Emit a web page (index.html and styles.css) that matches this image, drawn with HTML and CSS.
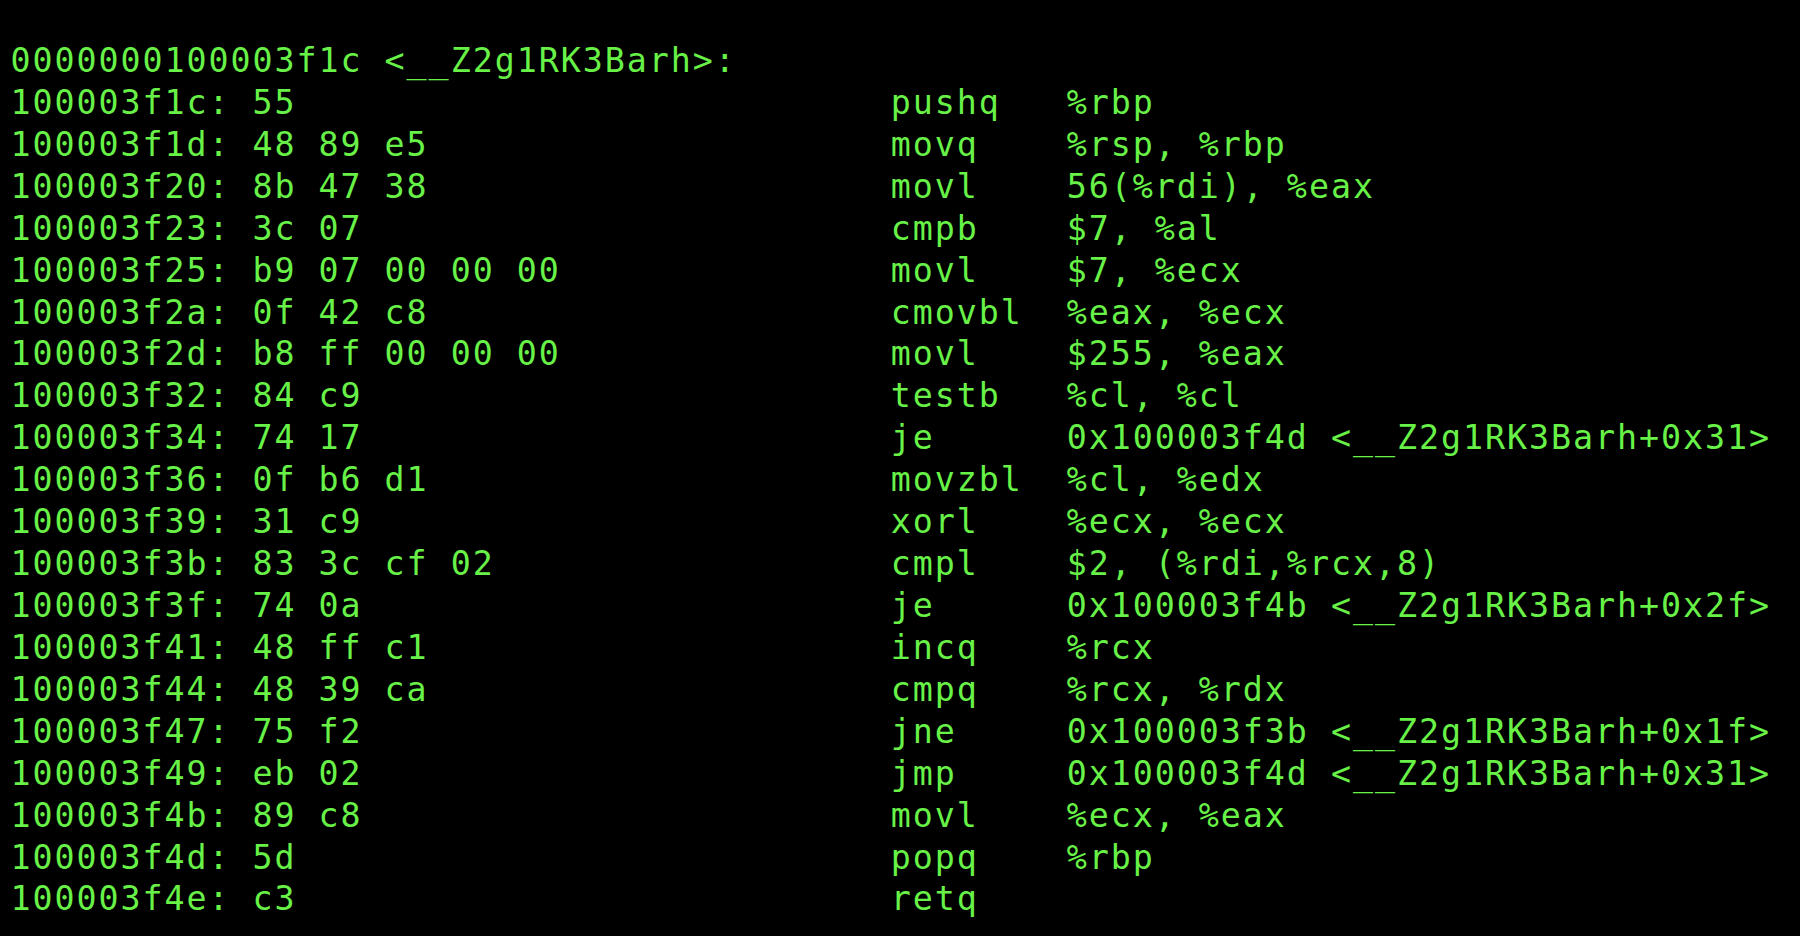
FILE: index.html
```html
<!DOCTYPE html>
<html>
<head>
<meta charset="utf-8">
<link rel="stylesheet" href="styles.css">
</head>
<body>
<pre class="term">0000000100003f1c &lt;__Z2g1RK3Barh&gt;:
100003f1c: 55                           pushq   %rbp
100003f1d: 48 89 e5                     movq    %rsp, %rbp
100003f20: 8b 47 38                     movl    56(%rdi), %eax
100003f23: 3c 07                        cmpb    $7, %al
100003f25: b9 07 00 00 00               movl    $7, %ecx
100003f2a: 0f 42 c8                     cmovbl  %eax, %ecx
100003f2d: b8 ff 00 00 00               movl    $255, %eax
100003f32: 84 c9                        testb   %cl, %cl
100003f34: 74 17                        je      0x100003f4d &lt;__Z2g1RK3Barh+0x31&gt;
100003f36: 0f b6 d1                     movzbl  %cl, %edx
100003f39: 31 c9                        xorl    %ecx, %ecx
100003f3b: 83 3c cf 02                  cmpl    $2, (%rdi,%rcx,8)
100003f3f: 74 0a                        je      0x100003f4b &lt;__Z2g1RK3Barh+0x2f&gt;
100003f41: 48 ff c1                     incq    %rcx
100003f44: 48 39 ca                     cmpq    %rcx, %rdx
100003f47: 75 f2                        jne     0x100003f3b &lt;__Z2g1RK3Barh+0x1f&gt;
100003f49: eb 02                        jmp     0x100003f4d &lt;__Z2g1RK3Barh+0x31&gt;
100003f4b: 89 c8                        movl    %ecx, %eax
100003f4d: 5d                           popq    %rbp
100003f4e: c3                           retq</pre>
</body>
</html>
```
FILE: styles.css
```css
html, body {
  margin: 0;
  padding: 0;
  background: #000;
  width: 1800px;
  height: 936px;
  overflow: hidden;
}
.term {
  margin: 0;
  padding: 40px 0 0 10.5px;
  font-family: "DejaVu Sans Mono", monospace;
  font-size: 33.3px;
  letter-spacing: 1.96px;
  line-height: 41.92px;
  color: #68f248;
  white-space: pre;
}
```
